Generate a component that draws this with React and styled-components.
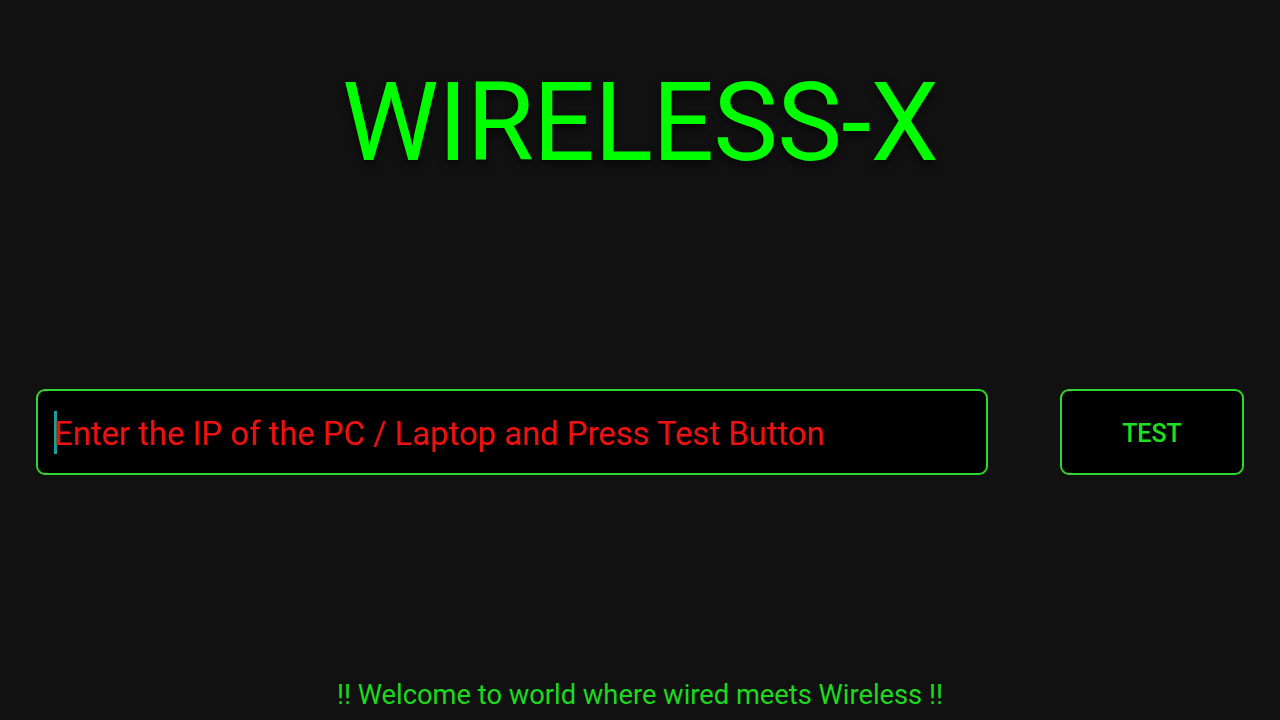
import React from "react";
import styled, { createGlobalStyle } from "styled-components";

const GREEN = "#00ff00";
const BORDER_GREEN = "#2fd82f";

const GlobalStyle = createGlobalStyle`
  html, body {
    margin: 0;
    padding: 0;
    background: #111111;
  }
  body {
    font-family: Roboto, "Liberation Sans", sans-serif;
  }
`;

const Screen = styled.div`
  width: 1280px;
  height: 720px;
  background: #111111;
  display: flex;
  flex-direction: column;
  align-items: center;
  overflow: hidden;
`;

const Title = styled.h1`
  margin: 59px 0 0;
  font-size: 109px;
  font-weight: 400;
  line-height: 128px;
  letter-spacing: -0.8px;
  color: ${GREEN};
  text-shadow: 0 4px 8px rgba(0, 0, 0, 0.6);
`;

const Row = styled.div`
  margin-top: 202px;
  width: 1208px;
  display: flex;
  justify-content: space-between;
`;

const Field = styled.div`
  box-sizing: border-box;
  width: 952px;
  height: 86px;
  border: 2px solid ${BORDER_GREEN};
  border-radius: 9px;
  background: #000;
  display: flex;
  align-items: center;
  padding-left: 16px;
`;

const Caret = styled.span`
  width: 3px;
  height: 43px;
  background: #1e9c9a;
  margin-right: -3px;
`;

const Placeholder = styled.span`
  font-size: 32.8px;
  color: #ee1111;
  margin-top: 3px;
`;

const Button = styled.button`
  box-sizing: border-box;
  width: 184px;
  height: 86px;
  border: 2px solid ${BORDER_GREEN};
  border-radius: 9px;
  background: #000;
  color: #1fe01f;
  font-family: Roboto, "Liberation Sans", sans-serif;
  font-weight: 500;
  font-size: 25px;
  padding: 2px 0 0;
`;

const Footer = styled.p`
  margin: auto 0 9px;
  font-size: 27.3px;
  color: #1ed81e;
`;

export default function App() {
  return (
    <>
      <GlobalStyle />
      <Screen>
        <Title>WIRELESS-X</Title>
        <Row>
          <Field>
            <Caret />
            <Placeholder>Enter the IP of the PC / Laptop and Press Test Button</Placeholder>
          </Field>
          <Button>TEST</Button>
        </Row>
        <Footer>!! Welcome to world where wired meets Wireless !!</Footer>
      </Screen>
    </>
  );
}
